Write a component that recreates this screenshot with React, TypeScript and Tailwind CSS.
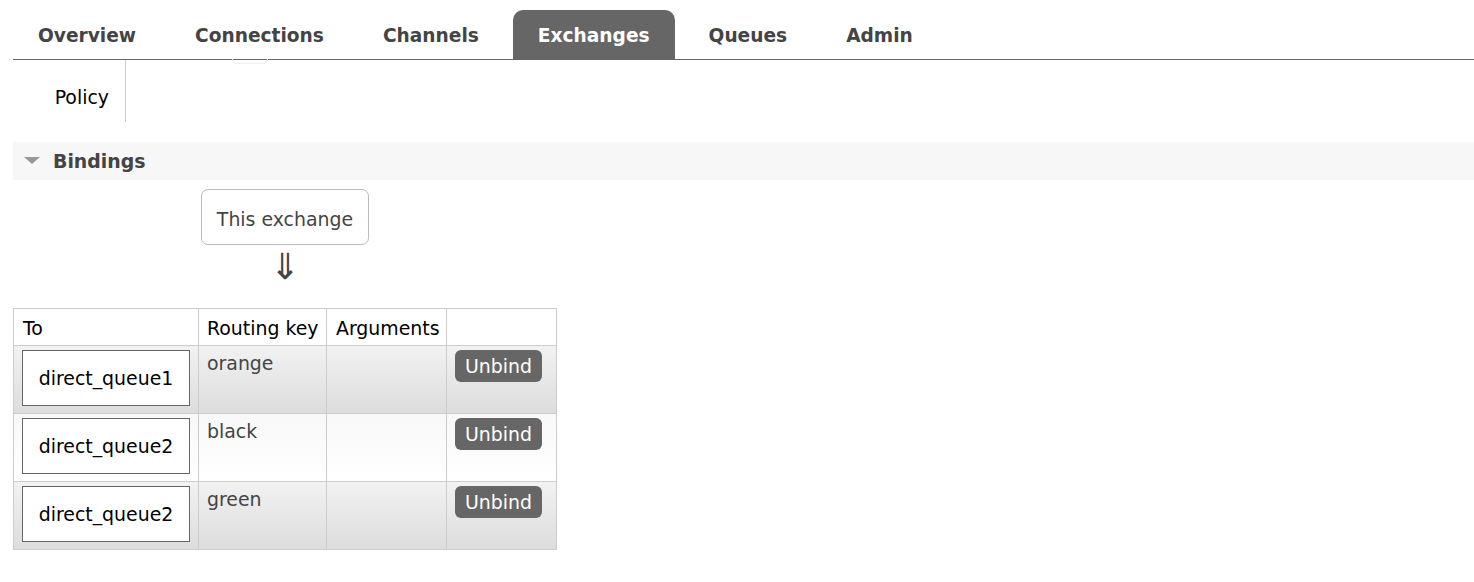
const tabs = ['Overview', 'Connections', 'Channels', 'Exchanges', 'Queues', 'Admin'];

const bindings = [
  { to: 'direct_queue1', key: 'orange', alt: true },
  { to: 'direct_queue2', key: 'black', alt: false },
  { to: 'direct_queue2', key: 'green', alt: true },
];

export default function App() {
  return (
    <div className="w-[1474px] h-[582px] bg-white overflow-hidden font-['DejaVu_Sans',sans-serif] text-[18.9px] leading-[22px] text-black">
      {/* Tabs */}
      <div className="relative ml-[13px] pt-[10px] border-b-[1.5px] border-[#666]">
        <ul className="flex gap-[9px] text-[18.6px]">
          {tabs.map((t) => (
            <li
              key={t}
              className={
                t === 'Exchanges'
                  ? 'h-[49px] px-[25px] pt-[2px] flex items-center font-bold bg-[#666] text-white rounded-t-[10px]'
                  : 'h-[49px] px-[25px] pt-[2px] flex items-center font-bold text-[#444]'
              }
            >
              {t}
            </li>
          ))}
        </ul>
        <div className="absolute left-[219px] top-[59px] w-[36px] h-[5px] border-b border-x border-[#eee] rounded-b-[6px]" />
      </div>

      {/* Policy */}
      <div className="ml-[13px] flex">
        <div className="w-[113px] h-[62px] border-r border-[#ccc] text-right pr-[16px] pt-[26px]">Policy</div>
      </div>

      {/* Bindings section */}
      <div className="ml-[13px] mt-[20px] h-[38px] bg-[#f7f7f7] flex items-center">
        <svg width="16" height="8" viewBox="0 0 16 8" className="ml-[11px] mr-[13px]">
          <polygon points="0,0 16,0 8,7" fill="#999" />
        </svg>
        <span className="font-bold text-[#444]">Bindings</span>
      </div>

      <div className="ml-[201px] mt-[9px] w-[168px]">
        <div className="h-[56px] pt-[3px] border border-[#bbb] rounded-[7px] flex items-center justify-center text-[#444]">
          This exchange
        </div>
        <div className="text-center text-[36px] leading-[38px] mt-[3px] text-[#444]">⇓</div>
      </div>

      <table className="ml-[13px] mt-[22px] w-[543px] table-fixed border-collapse border border-[#ccc] whitespace-nowrap">
        <colgroup>
          <col className="w-[185px]" />
          <col className="w-[128px]" />
          <col className="w-[120px]" />
          <col className="w-[110px]" />
        </colgroup>
        <thead>
          <tr className="h-[36px]">
            <th className="border border-[#ccc] text-left font-normal px-[9px] pt-[8px] pb-[6px] align-top">To</th>
            <th className="border border-[#ccc] text-left font-normal px-[8px] pt-[8px] pb-[6px] align-top">Routing key</th>
            <th className="border border-[#ccc] text-left font-normal px-[9px] pt-[8px] pb-[6px] align-top">Arguments</th>
            <th className="border border-[#ccc]"></th>
          </tr>
        </thead>
        <tbody>
          {bindings.map((b, i) => (
            <tr
              key={i}
              className={
                b.alt
                  ? 'h-[68px] bg-linear-to-b from-[#f2f2f2] to-[#dcdcdc]'
                  : 'h-[68px] bg-linear-to-b from-[#f8f8f8] to-[#ffffff]'
              }
            >
              <td className="border border-[#ccc] pl-[8px] pr-[8px] pt-[4px] pb-[6px] align-top">
                <div className="w-[168px] h-[56px] bg-white border border-[#666] flex items-center justify-center">
                  {b.to}
                </div>
              </td>
              <td className="border border-[#ccc] px-[8px] pt-[6px] align-top text-[#444]">{b.key}</td>
              <td className="border border-[#ccc] align-top"></td>
              <td className="border border-[#ccc] pl-[8px] pt-[4px] align-top">
                <span className="inline-block bg-[#666] text-white rounded-[6px] px-[10px] py-[5px]">Unbind</span>
              </td>
            </tr>
          ))}
        </tbody>
      </table>
    </div>
  );
}
